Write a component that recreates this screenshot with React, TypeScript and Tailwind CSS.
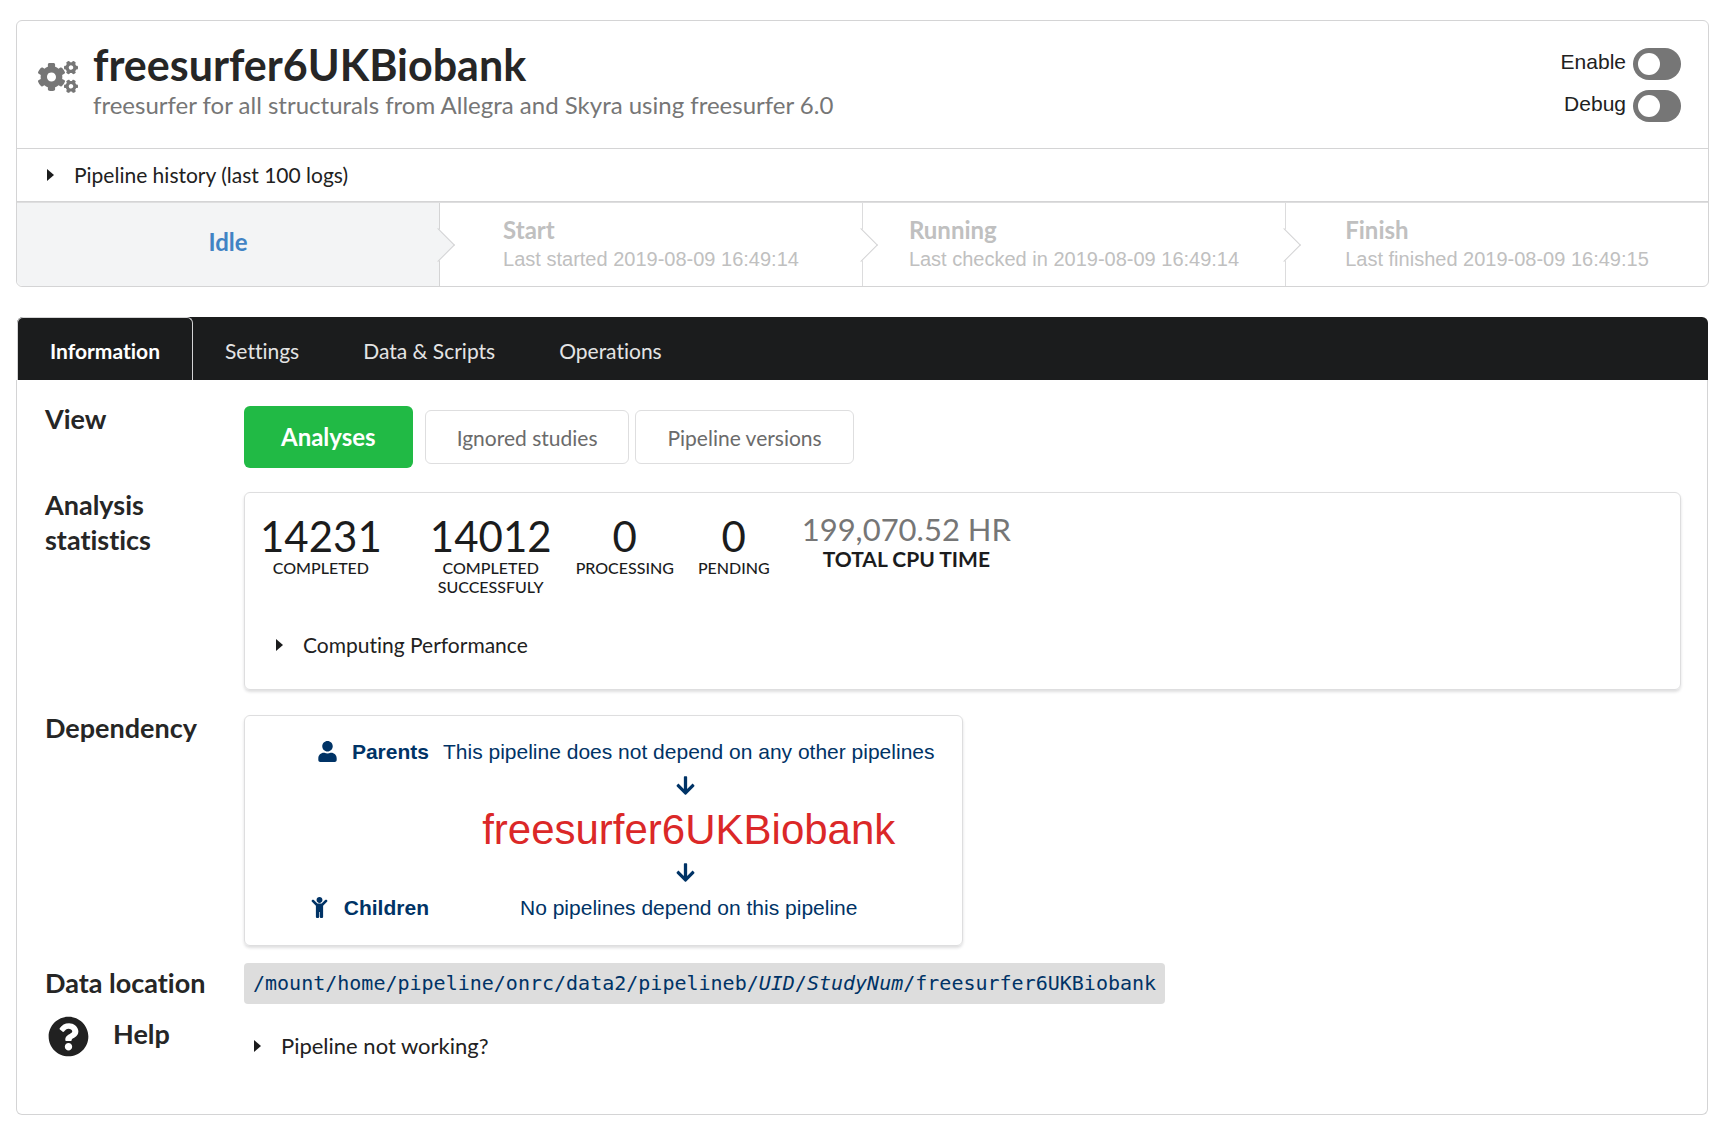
import { useState } from "react";
import type { ReactNode } from "react";
import { FaArrowDown, FaChild, FaCogs, FaQuestionCircle, FaUser } from "react-icons/fa";

const PIPELINE = "freesurfer6UKBiobank";

function Toggle({ id, label }: { id: string; label: string }) {
  const [on, setOn] = useState(false);
  return (
    <div className="flex items-center gap-[7px]">
      <label htmlFor={id} className="pb-1 font-['Liberation_Sans',sans-serif] text-[21px] leading-[28px]">
        {label}
      </label>
      <input
        id={id}
        type="checkbox"
        checked={on}
        onChange={(e) => setOn(e.target.checked)}
        className="flex h-8 w-12 cursor-pointer appearance-none items-center rounded-full bg-[#767676] px-[5px] before:size-[22px] before:rounded-full before:bg-white checked:justify-end checked:bg-[#21ba45]"
      />
    </div>
  );
}

function Caret() {
  return (
    <svg viewBox="0 0 7 12" className="h-3 w-[7px] shrink-0" aria-hidden="true">
      <path d="M0 0L7 6L0 12Z" fill="#1b1c1d" />
    </svg>
  );
}

function Disclosure({ children }: { children: ReactNode }) {
  return (
    <button type="button" className="flex cursor-pointer items-center gap-5 leading-[30px]">
      <Caret />
      <span>{children}</span>
    </button>
  );
}

function StepArrow({ active = false }: { active?: boolean }) {
  return (
    <span
      className={
        "absolute top-1/2 -right-[11px] z-10 size-6 -translate-y-1/2 rotate-[-45deg] border-r border-b border-[#d4d4d5] " +
        (active ? "bg-[#f3f4f5]" : "bg-white")
      }
    />
  );
}

function Step({ title, detail, last = false }: { title: string; detail: string; last?: boolean }) {
  return (
    <li
      className={
        "relative flex flex-1 items-center justify-center text-[#c0c0c0] " + (last ? "" : "border-r border-[#dcdcdd]")
      }
    >
      <div>
        <div className="text-[24px] leading-[28px] font-bold">{title}</div>
        <div className="font-['Liberation_Sans',sans-serif] text-[20px] leading-[30px]">{detail}</div>
      </div>
      {!last && <StepArrow />}
    </li>
  );
}

function Statistic({ value, label }: { value: string; label: ReactNode }) {
  return (
    <div className="flex flex-col items-center text-center">
      <div className="text-[42px] leading-[44px]">{value}</div>
      <div className="text-[16px] leading-[19px] font-medium">{label}</div>
    </div>
  );
}

function RowLabel({ children }: { children: ReactNode }) {
  return <h2 className="text-[27px] leading-[35px] font-bold text-[#262626]">{children}</h2>;
}

const tabs = ["Information", "Settings", "Data & Scripts", "Operations"];

export default function App() {
  const [tab, setTab] = useState(tabs[0]);
  return (
    <main className="bg-white pt-5 pr-[13px] pb-2.5 pl-4 font-[Lato,sans-serif] text-[21px] text-[#212121] [font-variant-ligatures:none]">
      <section className="rounded-md border border-[#d4d4d5]">
        <header className="flex h-[127px] items-start pr-[27px] pl-[21px]">
          <FaCogs className="mt-9 size-10 text-[#767676]" />
          <div className="ml-[15px] flex-1 pt-[19px]">
            <h1 className="text-[43px] leading-[49px] font-bold text-[#262626]">{PIPELINE}</h1>
            <p className="text-[24px] leading-[32px] text-[#767676]">
              freesurfer for all structurals from Allegra and Skyra using freesurfer 6.0
            </p>
          </div>
          <div className="flex flex-col items-end gap-[10px] pt-[27px]">
            <Toggle id="enable" label="Enable" />
            <Toggle id="debug" label="Debug" />
          </div>
        </header>
        <div className="border-y border-[#d4d4d5] px-[30px] py-[11px]">
          <Disclosure>Pipeline history (last 100 logs)</Disclosure>
        </div>
        <ol className="flex h-[84px] border-t border-[#dededf]">
          <li className="relative flex flex-1 items-center justify-center rounded-bl-md border-r border-[#d4d4d5] bg-[#f3f4f5] pb-1.5 text-[24px] leading-[29px] font-bold text-[#4183c4]">
            Idle
            <StepArrow active />
          </li>
          <Step title="Start" detail="Last started 2019-08-09 16:49:14" />
          <Step title="Running" detail="Last checked in 2019-08-09 16:49:14" />
          <Step title="Finish" detail="Last finished 2019-08-09 16:49:15" last />
        </ol>
      </section>

      <nav role="tablist" className="mt-[30px] mr-px ml-px flex h-[63px] rounded-t-md bg-[#1b1c1d]">
        {tabs.map((t) => (
          <button
            key={t}
            type="button"
            role="tab"
            aria-selected={t === tab}
            onClick={() => setTab(t)}
            className={
              "cursor-pointer rounded-t-md border border-b-0 pt-1 leading-[28px] " +
              (t === tab
                ? "border-[#d4d4d5] px-8 font-bold text-white"
                : "border-transparent px-[31px] text-[#e4e4e4]")
            }
          >
            {t}
          </button>
        ))}
      </nav>

      <section className="mr-px grid grid-cols-[199px_1fr] items-start rounded-b-md border border-t-0 border-[#d4d4d5] pr-[26px] pb-[53px] pl-7">
        <div className="pt-[21px]">
          <RowLabel>View</RowLabel>
        </div>
        <div className="flex items-center pt-[26px]">
          <button
            type="button"
            className="h-[62px] cursor-pointer rounded-md bg-[#21ba45] px-[37px] text-[24px] leading-[24px] font-bold text-white"
          >
            Analyses
          </button>
          <button
            type="button"
            className="ml-3 h-[54px] cursor-pointer rounded-md border border-[#dededf] px-[31px] leading-[21px] text-[#6b6b6b]"
          >
            Ignored studies
          </button>
          <button
            type="button"
            className="ml-1.5 h-[54px] cursor-pointer rounded-md border border-[#dededf] px-[31px] leading-[21px] text-[#6b6b6b]"
          >
            Pipeline versions
          </button>
        </div>

        <div className="w-40 pt-[19px]">
          <RowLabel>Analysis statistics</RowLabel>
        </div>
        <div className="mt-6 h-[198px] rounded-md border border-[#dededf] pt-[21px] pr-4 pl-[15px] shadow-[0_2px_3px_rgba(34,36,38,0.15)]">
          <div className="flex items-start text-[#1b1c1d]">
            <Statistic value="14231" label="COMPLETED" />
            <div className="ml-12">
              <Statistic
                value="14012"
                label={
                  <>
                    COMPLETED
                    <br />
                    SUCCESSFULY
                  </>
                }
              />
            </div>
            <div className="ml-6">
              <Statistic value="0" label="PROCESSING" />
            </div>
            <div className="ml-6">
              <Statistic value="0" label="PENDING" />
            </div>
            <div className="ml-8 text-center">
              <div className="text-[31px] leading-[31px] text-[#767676]">199,070.52 HR</div>
              <div className="leading-[28px] font-bold">TOTAL CPU TIME</div>
            </div>
          </div>
          <div className="mt-[34px] pl-4">
            <Disclosure>Computing Performance</Disclosure>
          </div>
        </div>

        <div className="pt-5">
          <RowLabel>Dependency</RowLabel>
        </div>
        <div className="mt-[25px] h-[231px] w-1/2 rounded-md border border-[#dededf] px-[27px] pt-[21px] font-['Liberation_Sans',sans-serif] leading-[30px] text-[#003366] shadow-[0_2px_3px_rgba(34,36,38,0.15)]">
          <div className="grid grid-cols-[1fr_auto] items-center gap-x-3.5">
            <div className="flex items-center justify-end gap-3.5 font-bold">
              <FaUser className="mb-0.5 size-[21px]" />
              Parents
            </div>
            <div className="text-center">This pipeline does not depend on any other pipelines</div>
            <div className="col-start-2 flex h-9 items-center justify-center pr-1.5">
              <FaArrowDown className="size-[21px]" />
            </div>
            <div className="col-start-2 text-center text-[42px] leading-[54px] text-[#db2828]">{PIPELINE}</div>
            <div className="col-start-2 flex h-[30px] items-center justify-center pr-1.5">
              <FaArrowDown className="size-[21px]" />
            </div>
            <div className="flex items-center justify-end gap-3.5 pt-1.5 font-bold">
              <FaChild className="mb-0.5 size-[21px]" />
              Children
            </div>
            <div className="pt-1.5 text-center">No pipelines depend on this pipeline</div>
          </div>
        </div>

        <div className="pt-[19px]">
          <RowLabel>Data location</RowLabel>
        </div>
        <div className="pt-[17px]">
          <code className="inline-block rounded-sm bg-[#dddddd] px-[9px] font-['DejaVu_Sans_Mono',monospace] text-[20px] leading-[41px] text-[#003366]">
            /mount/home/pipeline/onrc/data2/pipelineb/<i>UID</i>/<i>StudyNum</i>/{PIPELINE}
          </code>
        </div>

        <div className="flex items-start gap-6 pt-3 pl-[3px]">
          <FaQuestionCircle className="size-[41px]" />
          <RowLabel>Help</RowLabel>
        </div>
        <div className="pt-[27px] pl-[10px] text-[22px]">
          <Disclosure>Pipeline not working?</Disclosure>
        </div>
      </section>
    </main>
  );
}
